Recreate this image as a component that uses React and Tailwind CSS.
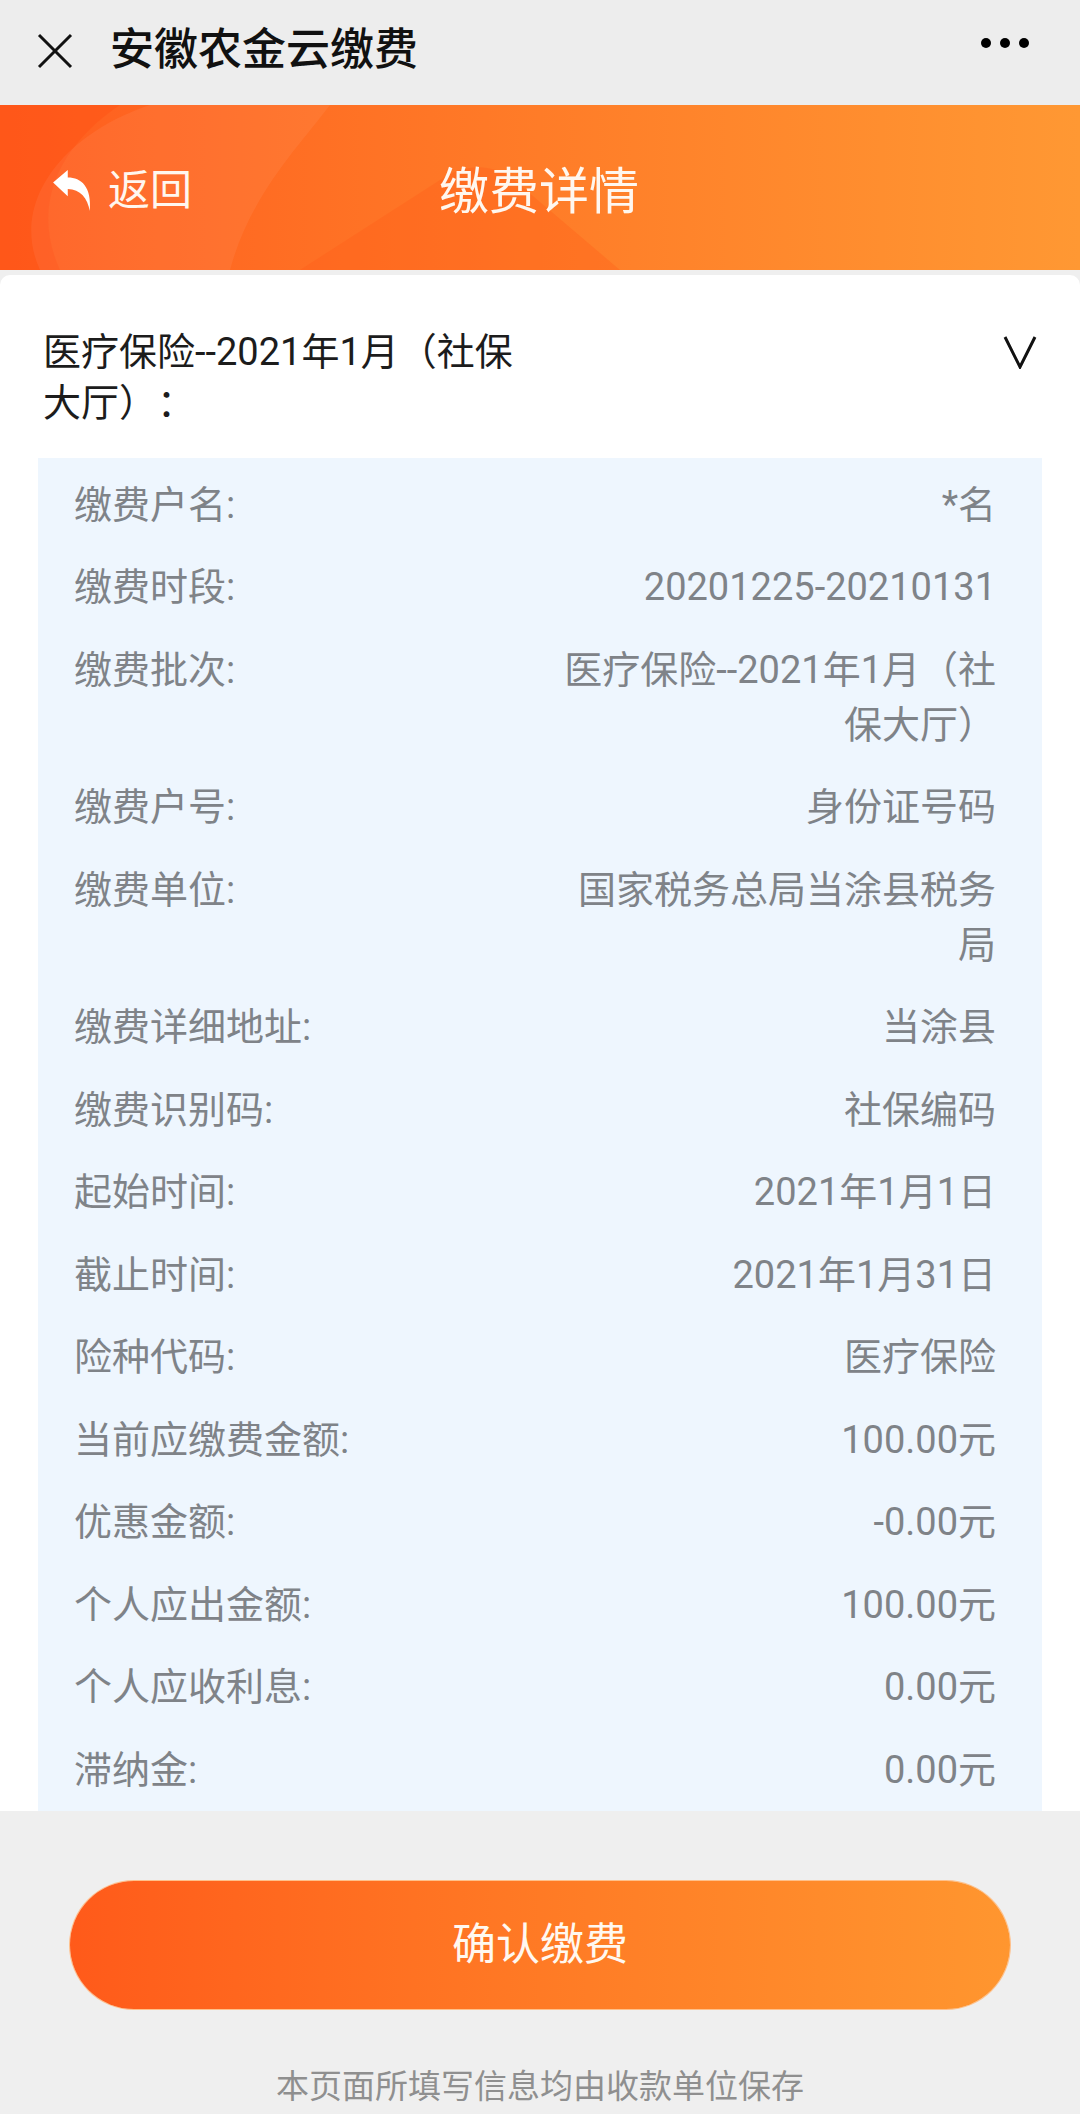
import React from 'react';

// 缴费详情页面
const rows = [
    { label: '缴费户名:', value: '*名' },
    { label: '缴费时段:', value: '20201225-20210131' },
    { label: '缴费批次:', value: '医疗保险--2021年1月（社保大厅）' },
    { label: '缴费户号:', value: '身份证号码' },
    { label: '缴费单位:', value: '国家税务总局当涂县税务局' },
    { label: '缴费详细地址:', value: '当涂县' },
    { label: '缴费识别码:', value: '社保编码' },
    { label: '起始时间:', value: '2021年1月1日' },
    { label: '截止时间:', value: '2021年1月31日' },
    { label: '险种代码:', value: '医疗保险' },
    { label: '当前应缴费金额:', value: '100.00元' },
    { label: '优惠金额:', value: '-0.00元' },
    { label: '个人应出金额:', value: '100.00元' },
    { label: '个人应收利息:', value: '0.00元' },
    { label: '滞纳金:', value: '0.00元' },
];

const BackArrow = () => (
    <svg width="42" height="44" viewBox="0 0 40 42" fill="#ffffff">
        <path d="M1 13 L15 1 L15 8 C28 8 38 17 36 40 C34 28 27 19 15 19 L15 26 Z" />
    </svg>
);

const HeaderDecor = () => (
    <svg className="absolute inset-0 w-full h-full" viewBox="0 0 1080 165" preserveAspectRatio="none">
        <path d="M0 0 L120 0 C60 40 30 100 60 165 L0 165 Z" fill="#ff4d12" opacity="0.35" />
        <path d="M40 165 C10 100 60 30 150 0 L330 0 C300 40 250 90 230 165 Z" fill="#ffffff" opacity="0.06" />
        <path d="M300 165 L440 75 C470 55 500 60 520 80 L620 165 Z" fill="#ff5a16" opacity="0.3" />
    </svg>
);

export default function App() {
    return (
        <div className="w-[1080px] h-[2114px] bg-[#efefef] overflow-hidden font-['Roboto','Noto_Sans_CJK_SC',sans-serif] [text-spacing-trim:space-all]">
            {/* 顶部栏 */}
            <div className="h-[105px] bg-[#ededed] flex items-center pl-[36px] pr-[51px]">
                <svg width="38" height="38" viewBox="0 0 38 38" stroke="#111" strokeWidth="3" className="mt-[-4px]">
                    <line x1="3" y1="3" x2="35" y2="35" />
                    <line x1="35" y1="3" x2="3" y2="35" />
                </svg>
                <div className="ml-[36px] text-[44px] font-medium text-[#111] leading-none mt-[-6px]">安徽农金云缴费</div>
                <div className="ml-auto flex gap-[9px] mt-[-20px]">
                    <span className="w-[10px] h-[10px] rounded-full bg-black" />
                    <span className="w-[10px] h-[10px] rounded-full bg-black" />
                    <span className="w-[10px] h-[10px] rounded-full bg-black" />
                </div>
            </div>

            {/* 橙色标题 */}
            <div className="relative h-[165px] bg-gradient-to-r from-[#ff5c1e] via-[#ff7c28] to-[#ff9833] overflow-hidden">
                <HeaderDecor />
                <div className="relative h-full flex items-center pl-[52px] pt-[6px]">
                    <BackArrow />
                    <span className="ml-[14px] text-[42px] text-[#fff7ef] leading-none">返回</span>
                </div>
                <div className="absolute inset-0 flex items-center justify-center pt-[8px] pr-[2px]">
                    <span className="text-[50px] text-[#fff7ef] leading-none">缴费详情</span>
                </div>
            </div>

            {/* 内容卡片 */}
            <div className="bg-white h-[1536px] mt-[5px] rounded-t-[10px] overflow-hidden pt-[52px]">
                <div className="flex justify-between pl-[43px] pr-[43px]">
                    <div className="w-[490px] text-[38px] leading-[51px] text-[#1c1c1c]">医疗保险--2021年1月（社保大厅）：</div>
                    <svg width="34" height="34" viewBox="0 0 34 34" fill="none" stroke="#111" strokeWidth="3" className="mt-[8px]">
                        <polyline points="2,2 17,32 32,2" />
                    </svg>
                </div>

                <div className="mx-[38px] mt-[29px] bg-[#eef6fe] pt-[6px] pl-[36px] pr-[46px] h-[1400px]">
                    {rows.map((row) => (
                        <div key={row.label} className="flex justify-between items-start py-[13.75px] text-[38px] leading-[55px] text-[#7f8388]">
                            <span className="shrink-0">{row.label}</span>
                            <span className="max-w-[445px] text-right">{row.value}</span>
                        </div>
                    ))}
                </div>
            </div>

            {/* 按钮 */}
            <div className="px-[70px] mt-[70px]">
                <button className="w-full h-[128px] rounded-full bg-gradient-to-r from-[#ff5a1a] to-[#ff962f] text-[44px] text-[#fff8f0] shadow-[0_0_0_1px_#ffc08a]">
                    确认缴费
                </button>
            </div>

            <div className="mt-[58px] text-center text-[33px] leading-[40px] text-[#8f8f8f]">本页面所填写信息均由收款单位保存</div>
        </div>
    );
}
